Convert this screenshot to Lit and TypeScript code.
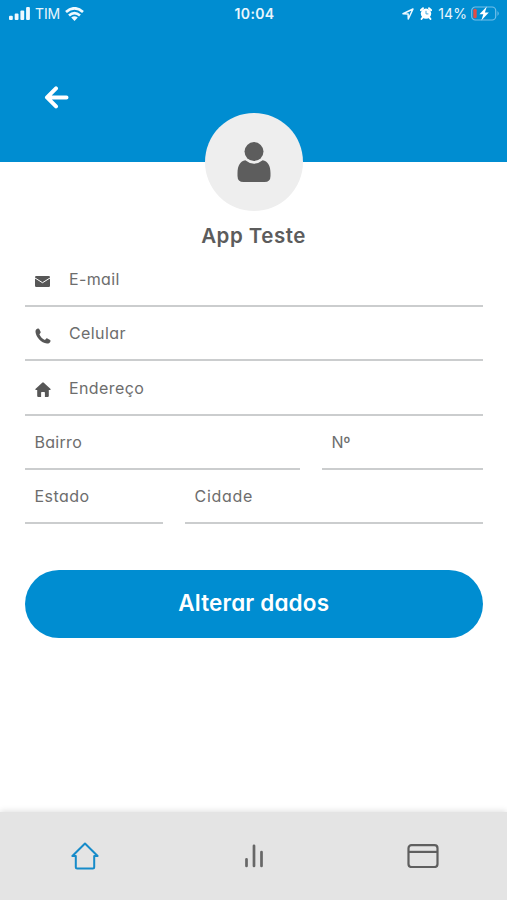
import { LitElement, html, css, svg } from "lit";
import { customElement, property } from "lit/decorators.js";

const icons = {
  mail: svg`<svg width="15" height="11" viewBox="0 0 15 11"><rect width="15" height="11" rx="1.3" fill="#575757"/><path d="M0 2 L7.5 6.7 L15 2" fill="none" stroke="#fff" stroke-width="1"/></svg>`,
  phone: svg`<svg width="16" height="16" viewBox="0 0 16 16"><path d="M2.8 .5 C1.2 1 .3 2.1 .5 4 C1.2 9.5 6 14.8 12 15.5 C13.8 15.6 15 14.7 15.5 13.2 C15.6 12.7 15.5 12.4 15.1 12.1 L12.4 10.5 C11.9 10.2 11.5 10.3 11.1 10.7 L9.9 12 C7.5 11 5.3 8.6 4.4 6.2 L5.4 5.1 C5.7 4.7 5.8 4.3 5.6 3.8 L4.2 1 C3.9 .4 3.5 .3 2.8 .5Z" fill="#575757"/></svg>`,
  home: svg`<svg width="16" height="15" viewBox="0 0 16 15"><path d="M7.2 .7 Q8 0 8.8 .7 L15.6 7 Q16 8 15 8.1 L13.8 8.1 L13.8 14 Q13.7 15 12.8 15 L9.9 15 L9.9 10.6 Q9.8 10 9.2 10 L6.8 10 Q6.2 10 6.1 10.6 L6.1 15 L3.2 15 Q2.3 15 2.2 14 L2.2 8.1 L1 8.1 Q0 8 .4 7Z" fill="#575757"/></svg>`,
};

@customElement("form-field")
class FormField extends LitElement {
  @property() label = "";
  @property() icon = "";
  @property({ type: Number }) spacing = 0;
  static styles = css`
    :host { display: flex; align-items: center; box-sizing: border-box; height: 54.35px; padding: 0.4px 10px 0 9.5px; border-bottom: 2px solid #cbcdce; }
    .icon { display: flex; width: 34.5px; padding-top: 4.6px; box-sizing: border-box; }
    .label { font-size: 16px; line-height: 20px; color: #6d6d6d; }
  `;
  render() {
    return html`${this.icon ? html`<span class="icon">${icons[this.icon as keyof typeof icons]}</span>` : ""}
      <span class="label" style="letter-spacing:${this.spacing}px">${this.label}</span>`;
  }
}

@customElement("status-bar")
class StatusBar extends LitElement {
  static styles = css`
    :host { display: grid; grid-template-columns: 1fr auto 1fr; align-items: center; height: 28px; padding: 0 7px 0 9px; color: #e9f6fd; font-size: 14px; line-height: 16px; }
    .side { display: flex; align-items: center; }
    .end { justify-content: flex-end; }
    .side, .time { margin-bottom: 1px; }
    .carrier { margin: 0 5px 0 5px; letter-spacing: -0.1px; }
    .time { font-weight: 600; letter-spacing: 0.35px; }
    .alarm { margin: 0 6px 0 6px; }
    .pct { margin-right: 4px; letter-spacing: 0.1px; }
  `;
  render() {
    return html`
      <div class="side">
        <svg width="21" height="13" viewBox="0 0 21 13" fill="#eef9ff"><rect y="8.8" width="3.8" height="4.2" rx="1"/><rect x="5.7" y="6.6" width="3.8" height="6.4" rx="1"/><rect x="11.4" y="3.5" width="3.8" height="9.5" rx="1"/><rect x="17.1" width="3.8" height="13" rx="1"/></svg>
        <span class="carrier">TIM</span>
        <svg width="19" height="14" viewBox="0 0 19 14" fill="none" stroke="#eef9ff" stroke-width="2.7"><path d="M1 5 Q9.5 -2.4 18 5"/><path d="M4 8.5 Q9.5 3.8 15 8.5"/><path d="M9.5 14 L6.2 10.6 Q9.5 7.9 12.8 10.6Z" fill="#eef9ff" stroke="none"/></svg>
      </div>
      <div class="time">10:04</div>
      <div class="side end">
        <svg width="12" height="12" viewBox="0 0 12 12"><path d="M1 5.7 L11 1 L6.3 11 L6.1 5.9Z" fill="none" stroke="#eef9ff" stroke-width="1.5" stroke-linejoin="round"/></svg>
        <svg class="alarm" width="12" height="13" viewBox="0 0 12 13"><circle cx="6" cy="6.6" r="5.2" fill="#fff"/><path d="M.8 3.2 L3 1.2 M11.2 3.2 L9 1.2 M2.6 10.7 L1.5 12 M9.4 10.7 L10.5 12" stroke="#fff" stroke-width="1.9" stroke-linecap="round"/><path d="M6 3.8 V6.9 H8.4" fill="none" stroke="#41a9df" stroke-width="1"/></svg>
        <span class="pct">14%</span>
        <svg width="29" height="15" viewBox="0 0 29 15"><rect x=".7" y="1" width="24" height="13" rx="3.6" fill="none" stroke="#72bfe9" stroke-width="1.2"/><path d="M26.5 5 Q29 7.5 26.5 10Z" fill="#72bfe9"/><rect x="2.3" y="2.8" width="3.4" height="9.4" rx="1.5" fill="#e34c45"/><path d="M15.8 .6 L8.4 8.3 H12.3 L10.3 14.4 L17.8 6.5 H13.9Z" fill="#fff"/></svg>
      </div>`;
  }
}

@customElement("app-root")
class AppRoot extends LitElement {
  static styles = css`
    :host { display: flex; flex-direction: column; width: 507px; height: 900px; overflow: hidden; background: #fff; font-family: Inter, "Open Sans", sans-serif; font-feature-settings: "cv11"; }
    header { height: 162px; background: #008dd1; flex: none; }
    .back { display: block; margin: 58px 0 0 44px; }
    .profile { display: flex; flex-direction: column; align-items: center; margin-top: -49px; }
    .avatar { display: flex; justify-content: center; width: 98px; height: 98px; border-radius: 50%; background: #eee; }
    .avatar svg { margin-top: 29px; }
    h1 { margin: 11px 0 0; font-size: 20.5px; line-height: 28px; font-weight: 600; color: #5c5c5c; letter-spacing: 0.5px; }
    form { display: flex; flex-direction: column; padding: 2.6px 24.5px 0 25px; }
    .row { display: grid; column-gap: 22px; }
    .district { grid-template-columns: 275px 1fr; }
    .city { grid-template-columns: 138px 1fr; }
    button { height: 68px; margin-top: 45.7px; padding: 0 0 2px; border: 0; border-radius: 34px; background: #008dd1; color: #fff; font: 600 22.5px/30px Inter, "Open Sans", sans-serif; font-feature-settings: "cv11"; letter-spacing: 0.15px; }
    nav { display: grid; grid-template-columns: repeat(3, 1fr); align-items: center; justify-items: center; height: 88px; margin-top: auto; flex: none; background: #e4e4e4; box-shadow: 0 -1px 6px rgba(0, 0, 0, 0.13); }
  `;
  render() {
    return html`
      <header>
        <status-bar></status-bar>
        <svg class="back" width="26" height="23" viewBox="0 0 26 23" fill="none" stroke="#fff" stroke-width="4" stroke-linecap="round" stroke-linejoin="round"><path d="M12 2.4 L3 11.4 L12 20.4 M3.5 11.4 H22.5"/></svg>
      </header>
      <section class="profile">
        <div class="avatar">
          <svg width="34" height="41" viewBox="0 0 34 41" fill="#5d5d5d"><circle cx="17" cy="9.6" r="9.5"/><path d="M8.3 18.3 Q17 25.3 25.7 18.3 C30.7 19 33.5 24 33.5 31 V34 Q33.5 40 27.5 40 H6.5 Q.5 40 .5 34 V31 C.5 24 3.3 19 8.3 18.3Z"/></svg>
        </div>
        <h1>App Teste</h1>
      </section>
      <form>
        <form-field icon="mail" label="E-mail" .spacing=${0.35}></form-field>
        <form-field icon="phone" label="Celular" .spacing=${0.4}></form-field>
        <form-field icon="home" label="Endereço" .spacing=${0.4}></form-field>
        <div class="row district">
          <form-field label="Bairro" .spacing=${0.3}></form-field>
          <form-field label="Nº" .spacing=${-0.3}></form-field>
        </div>
        <div class="row city">
          <form-field label="Estado" .spacing=${0.45}></form-field>
          <form-field label="Cidade" .spacing=${0.7}></form-field>
        </div>
        <button type="button">Alterar dados</button>
      </form>
      <nav>
        <svg width="28" height="28" viewBox="0 0 28 28" fill="none" stroke="#168bc9" stroke-width="2" stroke-linejoin="round" stroke-linecap="round"><path d="M14 1.5 L1.4 14 H4.8 V25 Q4.8 26.5 6.3 26.5 H21.7 Q23.2 26.5 23.2 25 V14 H26.6Z"/></svg>
        <svg width="20" height="24" viewBox="0 0 20 24" stroke="#676767" stroke-width="2.7" stroke-linecap="round"><path d="M2.5 15.3 V22 M10 1.8 V22 M17.5 8 V22"/></svg>
        <svg width="32" height="24" viewBox="0 0 32 24" fill="none" stroke="#5f5f5f" stroke-width="2.2"><rect x="1.5" y="1.2" width="29" height="21.8" rx="3"/><path d="M1.5 7.9 H30.5"/></svg>
      </nav>`;
  }
}
